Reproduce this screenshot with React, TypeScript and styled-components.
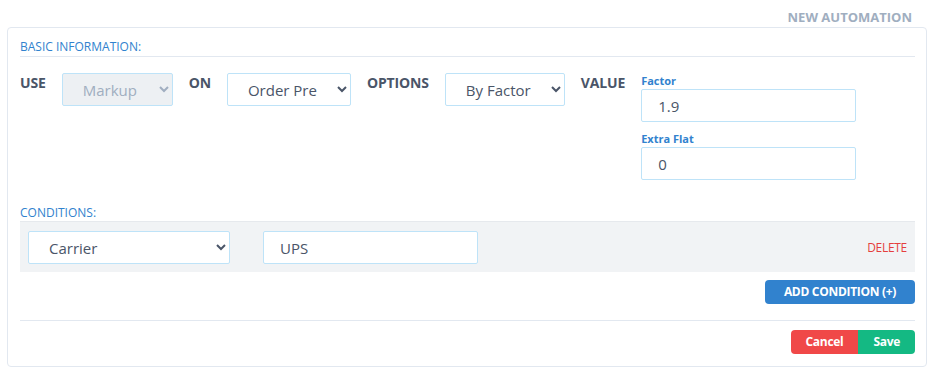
import React from "react";
import styled, { createGlobalStyle } from "styled-components";

const GlobalStyle = createGlobalStyle`
  html, body { margin: 0; padding: 0; background: #ffffff; }
  body { font-family: "Open Sans", "Noto Sans", sans-serif; color: #4a5568; }
  * { box-sizing: border-box; }
`;

const Page = styled.div`
  width: 936px;
  padding-left: 7px;
`;

const Header = styled.div`
  width: 920px;
  height: 27px;
  padding: 8px 15px 0 0;
  display: flex;
  justify-content: flex-end;
`;

const PageTitle = styled.h1`
  margin: 0;
  font-size: 13px;
  line-height: 18px;
  font-weight: 700;
  color: #a0aec0;
  text-transform: uppercase;
`;

const Card = styled.div`
  width: 920px;
  border: 1px solid #e2e8f0;
  border-radius: 4px;
  padding: 11px 11px 12px 12px;
`;

const SectionTitle = styled.h2<{ $underline?: boolean }>`
  margin: 0;
  font-size: 12px;
  line-height: 16px;
  font-weight: 400;
  color: #3182ce;
  text-transform: uppercase;
  padding-bottom: ${(p) => (p.$underline ? "1px" : "0")};
  border-bottom: ${(p) => (p.$underline ? "1px solid #e2e8f0" : "none")};
`;

const FieldsRow = styled.div`
  display: flex;
  align-items: flex-start;
  gap: 16px;
  margin-top: 16px;
`;

const RowLabel = styled.span`
  font-size: 14px;
  line-height: 20px;
  font-weight: 700;
  letter-spacing: -0.15px;
  color: #4a5568;
  text-transform: uppercase;
`;

const Select = styled.select<{ $width: number }>`
  width: ${(p) => p.$width}px;
  height: 33px;
  padding: 0 16px;
  border: 1px solid #bee3f8;
  border-radius: 2px;
  background: #ffffff;
  font-family: "Open Sans", sans-serif;
  font-size: 15px;
  color: #4a5568;
  outline: none;
  &:disabled {
    background: #edf0f3;
    color: #a0aec0;
    opacity: 1;
  }
`;

const ValueColumn = styled.div`
  display: flex;
  flex-direction: column;
  width: 215px;
`;

const FieldLabel = styled.label<{ $spaced?: boolean }>`
  font-size: 11px;
  line-height: 16px;
  font-weight: 700;
  color: #3182ce;
  margin-top: ${(p) => (p.$spaced ? "9px" : "0")};
`;

const TextInput = styled.input<{ $width: number }>`
  width: ${(p) => p.$width}px;
  height: 33px;
  padding: 0 16px;
  border: 1px solid #bee3f8;
  border-radius: 2px;
  background: #ffffff;
  font-family: "Open Sans", sans-serif;
  font-size: 15px;
  color: #4a5568;
  outline: none;
`;

const ConditionsBlock = styled.div`
  margin-top: 25px;
`;

const ConditionRow = styled.div`
  display: flex;
  align-items: center;
  gap: 33px;
  padding: 9px 8px 8px 8px;
  background: #f1f3f5;
  border-top: 1px solid #e6e9ed;
`;

const DeleteLink = styled.button`
  margin-left: auto;
  border: none;
  background: none;
  padding: 0;
  font-family: "Open Sans", sans-serif;
  font-size: 12px;
  line-height: 16px;
  letter-spacing: -0.3px;
  color: #e53e3e;
  text-transform: uppercase;
  cursor: pointer;
`;

const ActionRow = styled.div`
  display: flex;
  justify-content: flex-end;
  margin-top: 8px;
`;

const Button = styled.button<{ $color: string }>`
  height: 24px;
  padding: 0 15px;
  border: none;
  background: ${(p) => p.$color};
  color: #ffffff;
  font-family: "Open Sans", sans-serif;
  font-size: 12px;
  font-weight: 700;
  line-height: 16px;
  letter-spacing: -0.3px;
  cursor: pointer;
`;

const AddButton = styled(Button)`
  border-radius: 4px;
  width: 150px;
  padding: 0;
`;

const Divider = styled.hr`
  margin: 16px 0 0 0;
  border: none;
  border-top: 1px solid #e2e8f0;
`;

const FooterRow = styled.div`
  display: flex;
  justify-content: flex-end;
  margin-top: 9px;
  & > button:first-child {
    border-radius: 4px 0 0 4px;
  }
  & > button:last-child {
    border-radius: 0 4px 4px 0;
  }
`;

export default function App() {
  return (
    <>
      <GlobalStyle />
      <Page>
        <Header>
          <PageTitle>New Automation</PageTitle>
        </Header>
        <Card>
          <SectionTitle $underline>Basic Information:</SectionTitle>
          <FieldsRow>
            <RowLabel>Use</RowLabel>
            <Select $width={111} disabled defaultValue="markup">
              <option value="markup">Markup</option>
            </Select>
            <RowLabel>On</RowLabel>
            <Select $width={124} defaultValue="order">
              <option value="order">Order Pre</option>
            </Select>
            <RowLabel>Options</RowLabel>
            <Select $width={120} defaultValue="factor">
              <option value="factor">By Factor</option>
            </Select>
            <RowLabel>Value</RowLabel>
            <ValueColumn>
              <FieldLabel>Factor</FieldLabel>
              <TextInput $width={215} defaultValue="1.9" />
              <FieldLabel $spaced>Extra Flat</FieldLabel>
              <TextInput $width={215} defaultValue="0" />
            </ValueColumn>
          </FieldsRow>
          <ConditionsBlock>
            <SectionTitle>Conditions:</SectionTitle>
            <ConditionRow>
              <Select $width={202} defaultValue="carrier">
                <option value="carrier">Carrier</option>
              </Select>
              <TextInput $width={215} defaultValue="UPS" />
              <DeleteLink>Delete</DeleteLink>
            </ConditionRow>
          </ConditionsBlock>
          <ActionRow>
            <AddButton $color="#3182ce">ADD CONDITION (+)</AddButton>
          </ActionRow>
          <Divider />
          <FooterRow>
            <Button $color="#f04848">Cancel</Button>
            <Button $color="#14b983">Save</Button>
          </FooterRow>
        </Card>
      </Page>
    </>
  );
}
